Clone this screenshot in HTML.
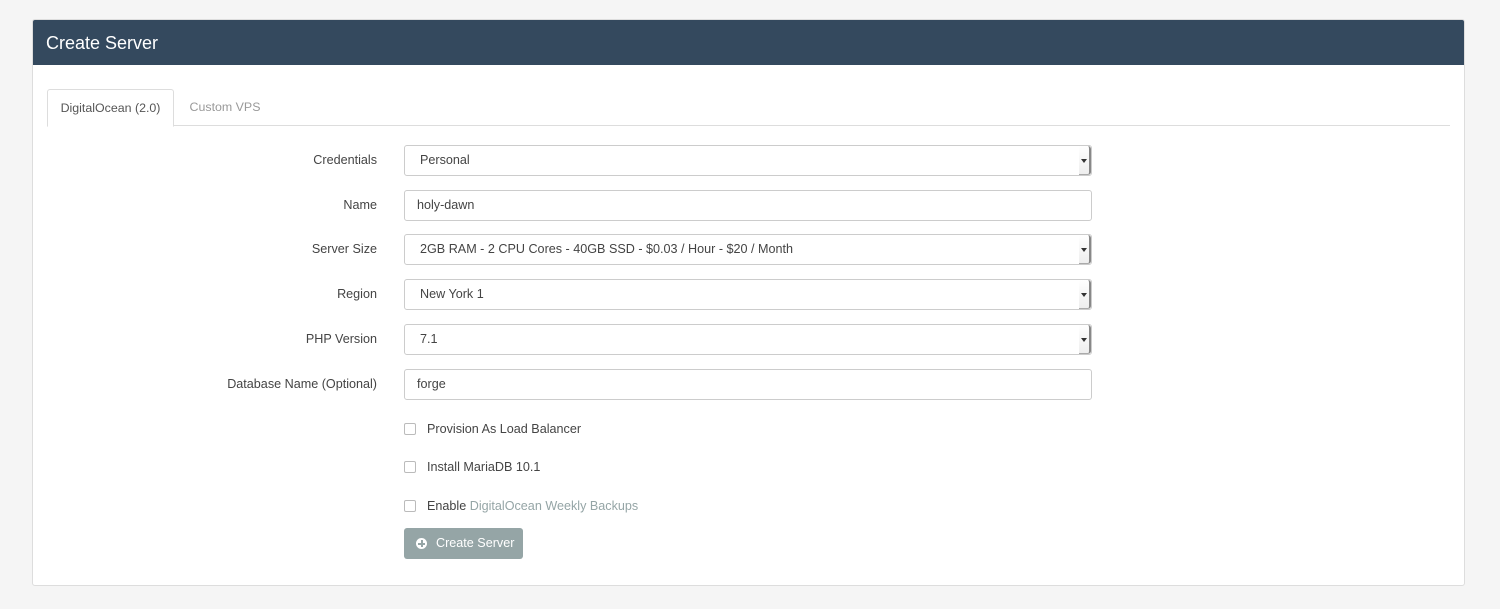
<!DOCTYPE html><html><head><style>
body{margin:0;background:#f5f5f5;font-family:"Liberation Sans",sans-serif;width:1500px;height:609px;overflow:hidden}
.panel{position:absolute;left:32px;top:19px;width:1433px;height:567px;background:#fff;border:1px solid #ddd;border-radius:3px;box-sizing:border-box}
.hd{height:45px;background:#34495e;color:#fff;font-size:18px;line-height:46px;padding-left:13px;border-radius:2px 2px 0 0}
.tabline{position:absolute;left:14px;right:14px;top:105px;border-top:1px solid #ddd}
.tab{position:absolute;top:69px;height:37px;font-size:12.4px;line-height:37px;text-align:center}
.t1{left:14px;width:127px;border:1px solid #ddd;border-bottom:1px solid #fff;border-radius:3px 3px 0 0;color:#555;background:#fff;box-sizing:border-box;height:38px}
.t2{left:143px;width:98px;color:#999}
.row{position:absolute;left:0;width:1060px;height:31px}
.lbl{position:absolute;right:716px;top:0;line-height:31px;font-size:12.6px;color:#444;text-align:right;white-space:nowrap}
.in{position:absolute;left:371px;width:688px;height:31px;border:1px solid #ccc;border-radius:3px;box-sizing:border-box;font-size:12.6px;color:#444;line-height:29px;padding-left:14px}
.in.s{padding-left:15px}
.in.s:after{content:"";position:absolute;right:0;top:0;width:12px;height:29px;border-right:2px solid #888;border-bottom:1px solid #aaa;border-radius:0 3px 3px 0;box-sizing:border-box;background:linear-gradient(#fff,#eee)}
.in.s:before{content:"";position:absolute;right:4px;top:13px;border-left:3px solid transparent;border-right:3px solid transparent;border-top:4px solid #333;z-index:1}
.in.t{padding-left:12px}
.cb{position:absolute;left:371px;font-size:12.6px;color:#444;line-height:16px}
.cb i{display:inline-block;width:10px;height:10px;border:1px solid #bbb;border-radius:2px;vertical-align:-2px;margin-right:11px}
.btn{position:absolute;left:371px;top:508px;width:119px;height:31px;background:#95a5a6;border-radius:3px;color:#fff;font-size:12.6px;line-height:31px}
.btn b{display:inline-block;width:11px;height:11px;border-radius:50%;background:#fff;position:absolute;left:12px;top:10px}
.btn b:before{content:"";position:absolute;left:2px;top:4.5px;width:7px;height:2px;background:#95a5a6}
.btn b:after{content:"";position:absolute;left:4.5px;top:2px;width:2px;height:7px;background:#95a5a6}
</style></head><body>
<div class="panel">
<div class="hd">Create Server</div>
<div class="tabline"></div>
<div class="tab t1">DigitalOcean (2.0)</div>
<div class="tab t2">Custom VPS</div>
<div class="row" style="top:125px"><div class="lbl">Credentials</div><div class="in s">Personal</div></div>
<div class="row" style="top:170px"><div class="lbl">Name</div><div class="in t">holy-dawn</div></div>
<div class="row" style="top:214px"><div class="lbl">Server Size</div><div class="in s">2GB RAM - 2 CPU Cores - 40GB SSD - $0.03 / Hour - $20 / Month</div></div>
<div class="row" style="top:259px"><div class="lbl">Region</div><div class="in s">New York 1</div></div>
<div class="row" style="top:304px"><div class="lbl">PHP Version</div><div class="in s">7.1</div></div>
<div class="row" style="top:349px"><div class="lbl">Database Name (Optional)</div><div class="in t">forge</div></div>
<div class="cb" style="top:401px"><i></i>Provision As Load Balancer</div>
<div class="cb" style="top:439px"><i></i>Install MariaDB 10.1</div>
<div class="cb" style="top:478px"><i></i>Enable <span style="color:#95a5a6">DigitalOcean Weekly Backups</span></div>
<div class="btn"><b></b><span style="position:absolute;left:32px">Create Server</span></div>
</div>
</body></html>
